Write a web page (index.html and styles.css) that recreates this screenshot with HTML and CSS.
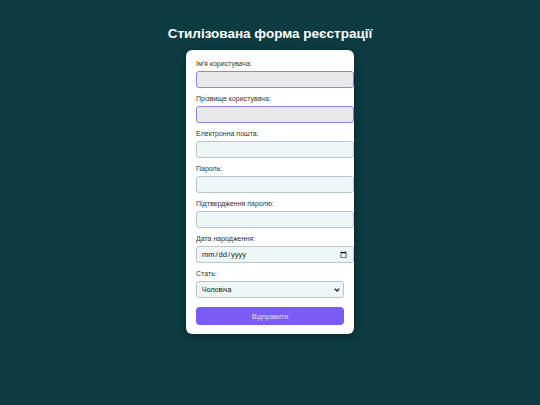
FILE: index.html
```html
<!DOCTYPE html>
<html lang="uk">
<head>
<meta charset="utf-8">
<title>Реєстрація</title>
<link rel="stylesheet" href="styles.css">
</head>
<body>
<h1 class="title">Стилізована форма реєстрації</h1>
<form class="card">
  <label class="lbl" for="fn">Ім'я користувача:</label>
  <input class="field field-auto" id="fn" type="text">
  <label class="lbl" for="ln">Прізвище користувача:</label>
  <input class="field field-auto" id="ln" type="text">
  <label class="lbl" for="em">Електронна пошта:</label>
  <input class="field" id="em" type="email">
  <label class="lbl" for="pw">Пароль:</label>
  <input class="field" id="pw" type="password">
  <label class="lbl" for="pw2">Підтвердження паролю:</label>
  <input class="field" id="pw2" type="password">
  <label class="lbl" for="bd">Дата народження:</label>
  <input class="field field-date" id="bd" type="date">
  <label class="lbl" for="sx">Стать:</label>
  <div class="select-wrap">
    <select class="select" id="sx">
      <option>Чоловіча</option>
      <option>Жіноча</option>
    </select>
    <svg class="chev" width="6" height="4" viewBox="0 0 6 4"><path d="M0.6 0.6 L3 3 L5.4 0.6" fill="none" stroke="#222" stroke-width="1.3"/></svg>
  </div>
  <button class="btn" type="button">Відправити</button>
</form>
</body>
</html>
```
FILE: styles.css
```css
html, body {
  margin: 0;
  padding: 0;
}
body {
  background: #0c3c41;
  font-family: "Liberation Sans", Arial, sans-serif;
  min-height: 405px;
  display: flex;
  flex-direction: column;
  align-items: center;
}
.title {
  margin: 25px 0 0;
  font-size: 13.5px;
  line-height: 18px;
  height: 25px;
  color: #ffffff;
  font-weight: bold;
}
.card {
  width: 148px;
  padding: 9px 10px;
  background: #ffffff;
  border-radius: 6px;
  box-shadow: 0 2px 8px rgba(0, 0, 0, 0.35);
  display: flex;
  flex-direction: column;
  align-items: flex-start;
}
.lbl {
  display: block;
  font-size: 7px;
  line-height: 9px;
  color: #333333;
  margin-bottom: 3px;
}
.field {
  box-sizing: content-box;
  width: 100%;
  height: 15px;
  padding: 0 4px;
  margin: 0 0 6px;
  border: 1px solid #b9c7cb;
  border-radius: 3px;
  background: #eef6f8;
  font-family: "Liberation Sans", Arial, sans-serif;
  font-size: 7px;
  color: #222;
  outline: none;
}
.field-auto {
  background: #e8e8e8;
  border-color: #8e84d8;
}
.field-date {
  font-size: 7.5px;
}
.select-wrap {
  position: relative;
  width: 100%;
  margin: 0 0 9px;
}
.select {
  -webkit-appearance: none;
  appearance: none;
  box-sizing: border-box;
  display: block;
  width: 100%;
  height: 17px;
  margin: 0;
  padding: 0 5px;
  border: 1px solid #b9c7cb;
  border-radius: 3px;
  background: #eef6f8;
  font-family: "Liberation Sans", Arial, sans-serif;
  font-size: 7px;
  color: #111;
}
.chev {
  position: absolute;
  right: 4px;
  top: 7px;
  pointer-events: none;
}
.btn {
  width: 100%;
  height: 18px;
  border: none;
  border-radius: 4px;
  background: #7b5bf6;
  color: #e4dcff;
  font-family: "Liberation Sans", Arial, sans-serif;
  font-size: 7px;
  padding: 0;
}
```
